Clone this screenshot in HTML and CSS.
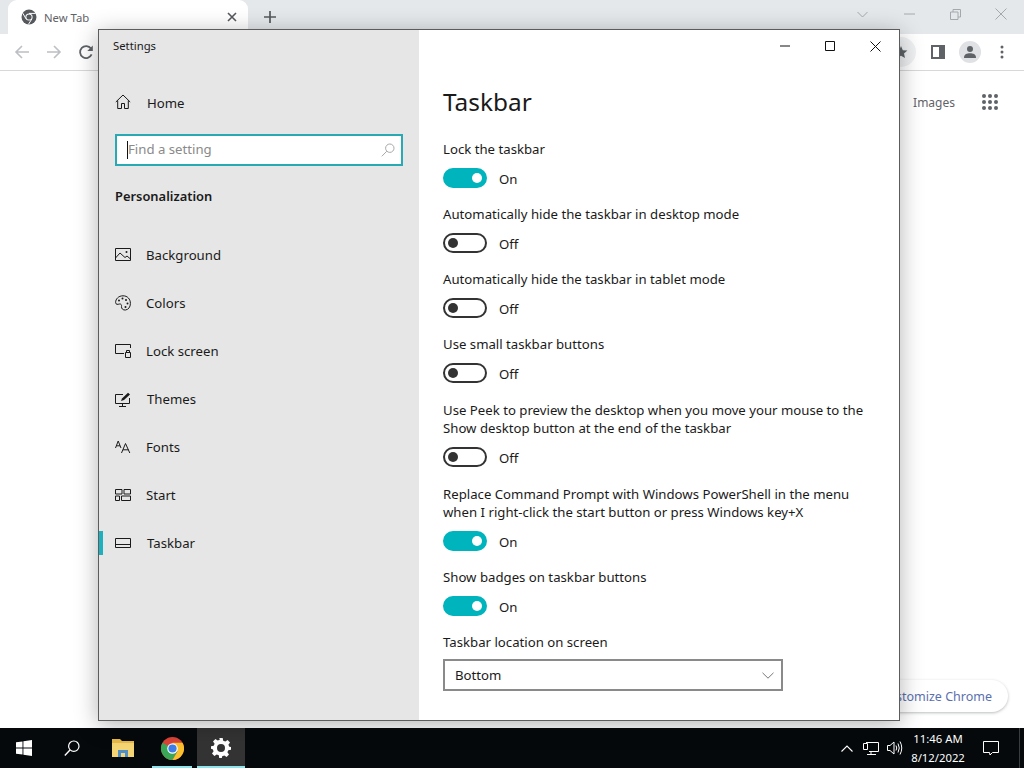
FILE: index.html
```html
<!DOCTYPE html>
<html lang="en">
<head>
<meta charset="utf-8">
<title>Settings - Taskbar</title>
<link rel="stylesheet" href="styles.css">
</head>
<body>
<div class="screen">
  <div class="browser">
    <div class="tabstrip">
      <div class="tab">
        <svg class="tab-logo" viewBox="0 0 16 16" width="16" height="16"><circle cx="8" cy="8" r="7.5" fill="#55585c"/><circle cx="8" cy="8" r="3.6" fill="#fff"/><circle cx="8" cy="8" r="2.6" fill="#55585c"/><path d="M8 4.4H14.6M5 9.8L1.8 4.2M10.9 9.9L7.4 15.4" stroke="#fff" stroke-width="1" fill="none"/></svg>
        <span class="tab-title">New Tab</span>
        <svg class="tab-close" viewBox="0 0 10 10" width="10" height="10"><path d="M1 1L9 9M9 1L1 9" stroke="#55585c" stroke-width="1.6"/></svg>
      </div>
      <svg class="new-tab" viewBox="0 0 12 12" width="12" height="12"><path d="M6 0V12M0 6H12" stroke="#55585c" stroke-width="1.7"/></svg>
      <div class="caption">
        <svg class="caption-chevron" viewBox="0 0 11 7" width="11" height="7"><path d="M.5 1L5.500 6L10.500 1" stroke="#a4a8ac" fill="none"/></svg>
        <svg viewBox="0 0 12 2" width="12" height="2"><path d="M0 1H11" stroke="#a4a8ac"/></svg>
        <svg viewBox="0 0 11 11" width="11" height="11"><path d="M.5 3H8V10.5H.5ZM3 3V.5H10.5V8H8" stroke="#a4a8ac" fill="none"/></svg>
        <svg viewBox="0 0 12 12" width="12" height="12"><path d="M.5 .5L11.5 11.5M11.5 .5L.5 11.5" stroke="#a4a8ac" fill="none"/></svg>
      </div>
    </div>
    <div class="toolbar">
      <svg viewBox="0 0 16 16" width="16" height="16"><path d="M15 8H2M8 2L2 8L8 14" stroke="#bcbfc3" stroke-width="1.6" fill="none"/></svg>
      <svg viewBox="0 0 16 16" width="16" height="16"><path d="M1 8H14M8 2L14 8L8 14" stroke="#bcbfc3" stroke-width="1.6" fill="none"/></svg>
      <svg viewBox="0 0 16 16" width="16" height="16"><path d="M13.6 10.4A6 6 0 1 1 13 4.6" stroke="#5f6368" stroke-width="1.8" fill="none"/><path d="M14.8 1.5V7H9.3Z" fill="#5f6368"/></svg>
      <div class="toolbar-right">
        <div class="star-bubble"><svg viewBox="0 0 14 14" width="14" height="14"><path d="M7 1L8.8 5.2L13.4 5.6L10 8.6L11 13L7 10.7L3 13L4 8.6L.6 5.6L5.2 5.2Z" fill="#5f6368"/></svg></div>
        <svg viewBox="0 0 14 14" width="14" height="14"><path d="M0 0H14V14H0Z" fill="#5f6368"/><path d="M2 2H8V12H2Z" fill="#fff"/></svg>
        <div class="avatar"><svg viewBox="0 0 14 14" width="14" height="14"><circle cx="7" cy="4" r="3" fill="#5f6368"/><path d="M1 13C1 9 4 8.300 7 8.300S13 9 13 13Z" fill="#5f6368"/></svg></div>
        <svg viewBox="0 0 4 14" width="4" height="14"><circle cx="2" cy="2" r="1.500" fill="#5f6368"/><circle cx="2" cy="7" r="1.500" fill="#5f6368"/><circle cx="2" cy="12" r="1.500" fill="#5f6368"/></svg>
      </div>
    </div>
    <div class="page">
      <div class="page-top">
        <span class="images">Images</span>
        <svg viewBox="0 0 16 16" width="16" height="16" fill="#5f6368"><circle cx="2" cy="2" r="2"/><circle cx="8" cy="2" r="2"/><circle cx="14" cy="2" r="2"/><circle cx="2" cy="8" r="2"/><circle cx="8" cy="8" r="2"/><circle cx="14" cy="8" r="2"/><circle cx="2" cy="14" r="2"/><circle cx="8" cy="14" r="2"/><circle cx="14" cy="14" r="2"/></svg>
      </div>
      <div class="customize">Customize Chrome</div>
    </div>
  </div>

  <div class="taskbar">
    <div class="tb-btn"><svg viewBox="0 0 16 16" width="16" height="16" fill="#fff"><path d="M0 2.300L6.500 1.400V7.500H0ZM7.400 1.300L16 0V7.500H7.400ZM0 8.500H6.500V14.600L0 13.700ZM7.400 8.500H16V16L7.400 14.700Z"/></svg></div>
    <div class="tb-btn"><svg viewBox="0 0 16 16" width="16" height="16"><circle cx="9.800" cy="6.200" r="5.200" stroke="#fff" stroke-width="1.200" fill="none"/><path d="M6 10L.8 15.500" stroke="#fff" stroke-width="1.400"/></svg></div>
    <div class="tb-btn folder"><svg viewBox="0 0 22 20" width="22" height="20"><path d="M0 1H8L10 3H22V19H0Z" fill="#e9b949"/><path d="M0 5H22V19H0Z" fill="#f6d574"/><path d="M6 19V12H16V19H13V15H9V19Z" fill="#4f8fc7"/></svg></div>
    <div class="tb-btn running"><svg viewBox="0 0 24 24" width="23" height="23"><circle cx="12" cy="12" r="12" fill="#db4437"/><path d="M12 12L1.600 6A12 12 0 0 0 12 24L17.200 15Z" fill="#3aa757"/><path d="M12 6H22.400A12 12 0 0 1 12 24L17.200 15Z" fill="#fbc02d"/><circle cx="12" cy="12" r="5.500" fill="#fff"/><circle cx="12" cy="12" r="4.300" fill="#3f7ee8"/></svg></div>
    <div class="tb-btn active"><svg viewBox="0 0 20 20" width="20" height="20"><path fill="#fff" fill-rule="evenodd" d="M8.300 0H11.700L12.200 2.700L14.300 3.600L16.600 2L19 4.400L17.400 6.700L18.300 8.800L20 9V11.700L17.300 12.200L16.400 14.300L18 16.600L15.600 19L13.300 17.400L11.200 18.300L10.800 20H8.200L7.800 17.300L5.700 16.400L3.400 18L1 15.600L2.600 13.300L1.700 11.200L0 10.800V8.200L2.700 7.800L3.600 5.700L2 3.400L4.400 1L6.700 2.600L8.800 1.700ZM10 6A4 4 0 1 0 10 14A4 4 0 1 0 10 6Z"/></svg></div>
    <div class="tray">
      <svg viewBox="0 0 12 7" width="12" height="7"><path d="M.5 6.500L6 1L11.500 6.500" stroke="#fff" stroke-width="1.100" fill="none"/></svg>
      <svg viewBox="0 0 16 13" width="16" height="13"><path d="M3 .5H15.500V9.500H6M8 9.500V12.500M4 12.500H13" stroke="#fff" fill="none"/><path d="M.5 1.500H4.500V7.500H.5Z" stroke="#fff" fill="#000"/></svg>
      <svg viewBox="0 0 16 14" width="16" height="14"><path d="M.5 4.500H3L7 1V13L3 9.500H.5Z" stroke="#fff" fill="none"/><path d="M9.500 4.500Q11 7 9.500 9.500M11.500 2.500Q14 7 11.500 11.500M13.500 .5Q17 7 13.500 13.500" stroke="#fff" fill="none" transform="translate(-.5 0)"/></svg>
      <div class="clock"><span>11:46 AM</span><span>8/12/2022</span></div>
      <svg class="notify" viewBox="0 0 16 16" width="16" height="16"><path d="M.5 1.500H15.500V12.500H9.500L7 15L6.500 12.500H.5Z" stroke="#fff" fill="none"/></svg>
      <div class="show-desktop"></div>
    </div>
  </div>

  <div class="window">
    <aside class="nav">
      <div class="app-title">Settings</div>
      <div class="nav-item home">
        <svg viewBox="0 0 16 16" width="16" height="16"><path d="M.8 8L8 1L15.200 8M2.700 6.500V14.500H6.500V9.500H9.500V14.500H13.300V6.500" stroke="#1a1a1a" fill="none"/></svg>
        <span>Home</span>
      </div>
      <div class="search">
        <span class="caret"></span>
        <span class="placeholder">Find a setting</span>
        <svg viewBox="0 0 14 14" width="14" height="14"><circle cx="8.800" cy="5.200" r="4.200" stroke="#a8a8a8" fill="none"/><path d="M5.800 8.200L.8 13.300" stroke="#a8a8a8"/></svg>
      </div>
      <h2 class="section">Personalization</h2>
      <ul class="nav-list">
        <li class="nav-item">
          <svg viewBox="0 0 16 14" width="16" height="14"><path d="M.5 .5H15.500V12.500H.5ZM.5 10L5 5L10 9.500L12 8L15.500 11" stroke="#1a1a1a" fill="none"/><circle cx="11.500" cy="4" r="1" fill="#1a1a1a"/></svg>
          <span>Background</span>
        </li>
        <li class="nav-item">
          <svg viewBox="0 0 16 16" width="16" height="16"><path d="M8 .8C3.500 .8 .6 4 .6 7.500C.6 9.800 3 9.500 4.300 9C6 8.600 6.800 10 6.500 11.500C6.200 13.500 8 15.300 10.500 15C13.500 14.500 15.400 12 15.400 8.500C15.400 4 12.500 .8 8 .8Z" stroke="#1a1a1a" fill="none"/><circle cx="4" cy="5.500" r="1" fill="#1a1a1a"/><circle cx="7.500" cy="3.500" r="1" fill="#1a1a1a"/><circle cx="11" cy="5" r="1" fill="#1a1a1a"/><circle cx="12.500" cy="8.500" r="1" fill="#1a1a1a"/><circle cx="10.500" cy="12" r="1" fill="#1a1a1a"/></svg>
          <span>Colors</span>
        </li>
        <li class="nav-item">
          <svg viewBox="0 0 16 14" width="16" height="14"><path d="M9 9.500H.5V.5H15.500V4" stroke="#1a1a1a" fill="none"/><path d="M10.500 8.500H15.500V13.500H10.500ZM11.500 8.500V6.500H14.500V8.500" stroke="#1a1a1a" fill="none"/></svg>
          <span>Lock screen</span>
        </li>
        <li class="nav-item wide">
          <svg viewBox="0 0 16 15" width="16" height="15"><path d="M8 2.500H.5V11.500H14.500V6M7.500 11.500V14M4 14.500H11" stroke="#1a1a1a" fill="none"/><path d="M6 9L7 6.500L13 .8L15 2.500L9 8Z" fill="#1a1a1a"/></svg>
          <span>Themes</span>
        </li>
        <li class="nav-item">
          <svg viewBox="0 0 16 14" width="16" height="14"><path d="M.5 8L3.200 1L6 8M1.500 5.800H5M6.500 13L10.500 3.500L14.800 13M8 9.800H13.500" stroke="#1a1a1a" fill="none"/></svg>
          <span>Fonts</span>
        </li>
        <li class="nav-item">
          <svg viewBox="0 0 16 12" width="16" height="12"><path d="M.5 .5H7V5H.5ZM9 .5H15.500V5H9ZM.5 7H4.500V11.500H.5ZM6.500 7H15.500V11.500H6.500Z" stroke="#1a1a1a" fill="none"/></svg>
          <span>Start</span>
        </li>
        <li class="nav-item current wide">
          <svg viewBox="0 0 16 10" width="16" height="10"><path d="M.5 .5H15.500V9.500H.5ZM.5 6.500H15.500" stroke="#1a1a1a" fill="none"/></svg>
          <span>Taskbar</span>
        </li>
      </ul>
    </aside>

    <main class="pane">
      <div class="controls">
        <svg viewBox="0 0 10 2" width="10" height="2"><path d="M0 1H10" stroke="#111"/></svg>
        <svg viewBox="0 0 10 10" width="10" height="10"><path d="M.5 .5H9.500V9.500H.5Z" stroke="#111" fill="none"/></svg>
        <svg viewBox="0 0 11 11" width="11" height="11"><path d="M.5 .5L10.500 10.500M10.500 .5L.5 10.500" stroke="#111" fill="none"/></svg>
      </div>
      <h1 class="title">Taskbar</h1>
      <div class="setting">
        <div class="label">Lock the taskbar</div>
        <div class="switch-row"><span class="switch on"></span><span class="state">On</span></div>
      </div>
      <div class="setting">
        <div class="label">Automatically hide the taskbar in desktop mode</div>
        <div class="switch-row"><span class="switch"></span><span class="state">Off</span></div>
      </div>
      <div class="setting">
        <div class="label">Automatically hide the taskbar in tablet mode</div>
        <div class="switch-row"><span class="switch"></span><span class="state">Off</span></div>
      </div>
      <div class="setting">
        <div class="label">Use small taskbar buttons</div>
        <div class="switch-row"><span class="switch"></span><span class="state">Off</span></div>
      </div>
      <div class="setting two-line">
        <div class="label">Use Peek to preview the desktop when you move your mouse to the<br>Show desktop button at the end of the taskbar</div>
        <div class="switch-row"><span class="switch"></span><span class="state">Off</span></div>
      </div>
      <div class="setting two-line">
        <div class="label">Replace Command Prompt with Windows PowerShell in the menu<br>when I right-click the start button or press Windows key+X</div>
        <div class="switch-row"><span class="switch on"></span><span class="state">On</span></div>
      </div>
      <div class="setting">
        <div class="label">Show badges on taskbar buttons</div>
        <div class="switch-row"><span class="switch on"></span><span class="state">On</span></div>
      </div>
      <div class="setting">
        <div class="label">Taskbar location on screen</div>
        <div class="select">
          <span>Bottom</span>
          <svg viewBox="0 0 12 7" width="12" height="7"><path d="M.5 .8L6 6.200L11.500 .8" stroke="#777" fill="none"/></svg>
        </div>
      </div>
    </main>
  </div>
</div>
</body>
</html>
```
FILE: styles.css
```css
* { box-sizing: border-box; }
html, body { margin: 0; padding: 0; }
body { font-family: "Noto Sans", "Open Sans", sans-serif; color: #1a1a1a; }
svg { display: block; flex: none; }

.screen { position: relative; width: 1024px; height: 768px; overflow: hidden; display: flex; flex-direction: column; background: #fff; }

/* Chrome behind */
.browser { flex: 1; display: flex; flex-direction: column; min-height: 0; }
.tabstrip { height: 34px; background: #e5e8eb; display: flex; align-items: center; padding-left: 8px; flex: none; }
.tab { width: 240px; height: 34px; background: #fff; border-radius: 9px 9px 0 0; display: flex; align-items: center; padding: 0 11px 0 13px; }
.tab-title { margin-left: 7px; font-size: 11.3px; color: #5f6368; flex: 1; }
.new-tab { margin-left: 16px; }
.caption { margin-left: auto; display: flex; align-items: center; gap: 34px; padding: 0 17px 6px 0; }
.caption-chevron { margin-right: 2px; }
.toolbar { height: 37px; flex: none; background: #fff; border-bottom: 1px solid #d6d8da; display: flex; align-items: center; gap: 16px; padding: 0 14px; }
.toolbar-right { margin-left: auto; display: flex; align-items: center; gap: 14px; padding-right: 6px; }
.star-bubble { width: 30px; height: 30px; border-radius: 50%; background: #eff1f3; display: flex; align-items: center; justify-content: center; margin-right: 1px; }
.avatar { width: 22px; height: 22px; border-radius: 50%; background: #dfe1e5; display: flex; align-items: center; justify-content: center; margin-right: 5px; }
.page { flex: 1; display: flex; flex-direction: column; padding: 22px 16px 16px 0; }
.page-top { display: flex; align-items: center; justify-content: flex-end; gap: 27px; padding-right: 10px; }
.images { font-size: 12px; color: #5f6368; padding-top: 1px; }
.customize { margin-top: auto; align-self: flex-end; height: 32px; padding: 1px 16px 0; border-radius: 16px; background: #fff; box-shadow: 0 1px 3px rgba(60,64,67,.35); font-size: 12.5px; line-height: 31px; color: #5a6fae; }

/* Taskbar */
.taskbar { height: 40px; flex: none; background: #05090c; display: flex; align-items: stretch; color: #fff; }
.tb-btn { width: 48px; display: flex; align-items: center; justify-content: center; position: relative; }
.tb-btn.folder { margin-left: 3px; }
.tb-btn.running { margin-left: 1px; }
.tb-btn.running::after, .tb-btn.active::after { content: ""; position: absolute; left: 4px; right: 4px; bottom: 0; height: 2px; background: #8fe3ea; }
.tb-btn.active { background: #333; margin-left: 1px; }
.tb-btn.active::after { left: 0; right: 0; }
.tray { margin-left: auto; display: flex; align-items: center; }
.tray > svg:nth-child(1) { margin-right: 10px; }
.tray > svg:nth-child(2) { margin-right: 8px; }
.clock { width: 70px; display: flex; flex-direction: column; align-items: center; font-size: 11.3px; line-height: 19px; }
.notify { margin-left: 10px; }
.show-desktop { width: 1px; height: 40px; background: #3a3d40; margin-left: 20px; margin-right: 4px; }

/* Settings window: sits over the desktop */
.window { position: absolute; left: 98px; top: 29px; width: 802px; height: 692px; border: 1px solid #5c5c5c; background: #fff; display: flex; box-shadow: 0 4px 22px rgba(0,0,0,.3); }
.nav { width: 320px; flex: none; background: #e6e6e6; display: flex; flex-direction: column; }
.app-title { font-size: 11.3px; line-height: 16px; padding: 8px 0 1px 14px; }
.nav-item { display: flex; align-items: center; height: 48px; padding-left: 16px; font-size: 13.2px; position: relative; }
.nav-item span { margin-left: 15px; }
.nav-item.wide span { margin-left: 16px; }
.home { margin-top: 22px; height: 50px; }
.home svg { margin-bottom: 1px; }
.home span { margin: 2px 0 0 16px; }
.search { margin: 7px 0 0 16px; width: 288px; height: 32px; background: #fff; border: 2px solid #28aab4; display: flex; align-items: center; padding: 0 6px 0 10px; }
.caret { width: 1px; height: 18px; background: #111; flex: none; }
.placeholder { flex: 1; font-size: 13.2px; color: #8a8a8a; padding-bottom: 2px; }
.section { margin: 20px 0 0 16px; font-size: 12.9px; line-height: 20px; font-weight: 600; }
.nav-list { list-style: none; margin: 25px 0 0; padding: 0; }
.current::before { content: ""; position: absolute; left: 0; top: 12px; width: 4px; height: 24px; background: #1cb1bc; }

.pane { flex: 1; min-width: 0; position: relative; padding: 0 24px; }
.controls { position: absolute; top: 0; right: 0; height: 32px; display: flex; align-items: center; }
.controls svg { margin-right: 35px; }
.controls svg:last-child { margin-right: 18px; }
.title { margin: 52px 0 0; font-size: 24.4px; line-height: 40px; font-weight: 400; }
.setting { margin-bottom: 17px; }
.title + .setting { margin-top: 18px; }
.two-line { margin-top: 18px; }
.label { font-size: 13.2px; line-height: 18px; }
.switch-row { display: flex; align-items: center; gap: 12px; font-size: 13.2px; height: 20px; margin-top: 10px; }
.state { padding-top: 2px; }
.switch { width: 44px; height: 20px; border-radius: 10px; border: 2px solid #333; background: #fff; position: relative; flex: none; }
.switch::after { content: ""; position: absolute; left: 3px; top: 3px; width: 10px; height: 10px; border-radius: 50%; background: #333; }
.switch.on { background: #00b4bd; border-color: #00b4bd; }
.switch.on::after { left: auto; right: 3px; background: #fff; }
.select { margin-top: 8px; width: 340px; height: 32px; border: 2px solid #8a8a8a; display: flex; align-items: center; justify-content: space-between; padding: 0 7px 0 10px; font-size: 13.2px; }
```
